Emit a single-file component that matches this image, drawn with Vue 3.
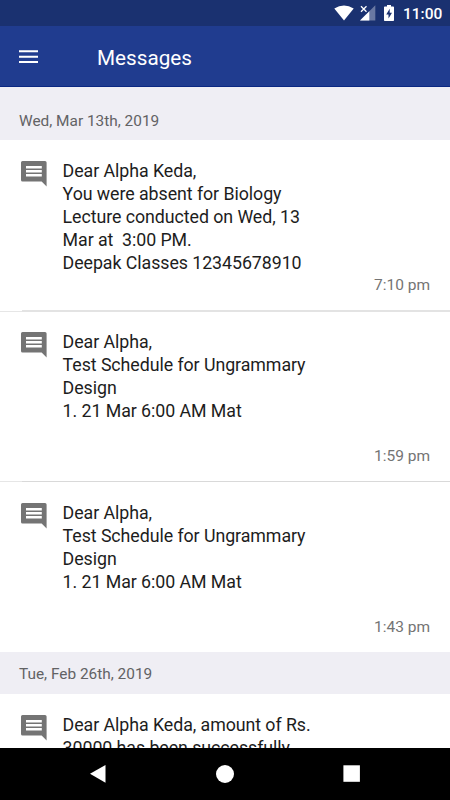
<script setup>
const groups = [
  {
    date: 'Wed, Mar 13th, 2019',
    messages: [
      {
        time: '7:10 pm',
        lines: [
          'Dear Alpha Keda,',
          'You were absent for Biology',
          'Lecture conducted on Wed, 13',
          'Mar at  3:00 PM.',
          'Deepak Classes 12345678910',
        ],
      },
      {
        time: '1:59 pm',
        lines: ['Dear Alpha,', 'Test Schedule for Ungrammary', 'Design', '1. 21 Mar 6:00 AM Mat'],
      },
      {
        time: '1:43 pm',
        lines: ['Dear Alpha,', 'Test Schedule for Ungrammary', 'Design', '1. 21 Mar 6:00 AM Mat'],
      },
    ],
  },
  {
    date: 'Tue, Feb 26th, 2019',
    messages: [
      {
        time: '',
        lines: ['Dear Alpha Keda, amount of Rs.', '30000 has been successfully'],
      },
    ],
  },
]
</script>

<template>
  <div class="screen">
    <div class="status">
      <svg class="wifi" width="20" height="16" viewBox="0 0 20 16">
        <path d="M0.3 3.6Q10 -2.8 19.7 3.6L10 15.6Z" fill="#fff" />
      </svg>
      <svg class="signal" width="16" height="16" viewBox="0 0 16 16">
        <path d="M15.3 0.2V15.5H0Z" fill="#fff" opacity="0.35" />
        <path d="M9.3 6.2V15.5H0Z" fill="#fff" />
        <path d="M0 0H7.5V7.5H0Z" fill="#1a3170" />
        <path d="M1 1.3L6.5 6.8M6.5 1.3L1 6.8" stroke="#fff" stroke-width="1.3" />
      </svg>
      <svg class="battery" width="10" height="16" viewBox="0 0 10 16">
        <path d="M3 0H7V1.4H9.2Q10 1.4 10 2.2V15.2Q10 16 9.2 16H.8Q0 16 0 15.2V2.2Q0 1.4 .8 1.4H3Z" fill="#fff" />
        <path d="M5.7 3.8L2.2 9.6H4.5V13.5L8 7.7H5.7Z" fill="#1a3170" />
      </svg>
      <span class="clock">11:00</span>
    </div>

    <header class="bar">
      <svg class="menu" width="19" height="14" viewBox="0 0 19 14">
        <path d="M0 1.3H19M0 6.8H19M0 12H19" stroke="#fff" stroke-width="2" />
      </svg>
      <h1 class="title">Messages</h1>
    </header>

    <main class="list">
      <section v-for="group in groups" :key="group.date" class="group">
        <h2 class="date">{{ group.date }}</h2>
        <article v-for="(message, i) in group.messages" :key="i" class="message">
          <svg class="comment" width="26" height="26" viewBox="0 0 26 26">
            <path
              fill="#747474"
              fill-rule="evenodd"
              d="M1.5 0H24Q25.6 0 25.6 1.5V25.4L20.6 20.4H1.5Q0 20.4 0 18.9V1.5Q0 0 1.5 0ZM5 5V7.6H20.8V5ZM5 9V11.5H20.8V9ZM5 13V15.5H20.8V13Z"
            />
          </svg>
          <div class="body">
            <p v-for="(line, n) in message.lines" :key="n" class="line">{{ line }}</p>
          </div>
          <time class="time">{{ message.time }}</time>
        </article>
      </section>
    </main>

    <nav class="nav">
      <svg class="key" width="20" height="20" viewBox="0 0 20 20"><path d="M2 9.8L17.5 1V18.8Z" fill="#fff" /></svg>
      <svg class="key" width="20" height="20" viewBox="0 0 20 20"><circle cx="10" cy="10" r="9" fill="#fff" /></svg>
      <svg class="key" width="20" height="20" viewBox="0 0 20 20"><rect x="1.4" y="1.3" width="16.5" height="16.5" fill="#fff" /></svg>
    </nav>
  </div>
</template>

<style>
body {
  margin: 0;
  overflow: hidden;
}
</style>

<style scoped>
.screen {
  display: flex;
  flex-direction: column;
  width: 450px;
  height: 800px;
  overflow: hidden;
  background: #fff;
  font-family: Roboto, sans-serif;
}
.status {
  display: flex;
  flex: none;
  align-items: center;
  justify-content: flex-end;
  height: 26px;
  padding-right: 9px;
  box-sizing: border-box;
  background: #1a3170;
}
.signal {
  margin-left: 6px;
}
.battery {
  margin-left: 8px;
}
.clock {
  width: 38px;
  margin-left: 9px;
  padding-top: 3px;
  color: #fff;
  font-size: 15.5px;
  font-weight: 500;
  line-height: 23px;
  white-space: nowrap;
}
.bar {
  display: flex;
  flex: none;
  align-items: center;
  height: 61px;
  padding: 2px 0 0 19px;
  box-sizing: border-box;
  background: #203c8f;
  border-bottom: 1px solid #0b2882;
}
.title {
  margin: 2px 0 0 59px;
  color: #fff;
  font-size: 20.7px;
  font-weight: 400;
  line-height: 28px;
}
.list {
  flex: 1;
  min-height: 0;
  overflow: hidden;
}
.date {
  display: flex;
  align-items: center;
  height: 42px;
  margin: 0;
  padding: 2px 0 0 19px;
  box-sizing: border-box;
  background: #efeef4;
  color: #626264;
  font-size: 15.4px;
  font-weight: 400;
}
.group:first-child .date {
  height: 53px;
  padding-top: 15px;
}
.message {
  display: grid;
  grid-template-columns: 41.6px 1fr;
  grid-template-rows: 1fr 20px;
  height: 170px;
  padding: 18px 20px 16px 21px;
  box-sizing: border-box;
  background:
    linear-gradient(#d9d9d9, #d9d9d9) 22px 100% / 100% 1px no-repeat,
    linear-gradient(#e6e6e6, #e6e6e6) 0 100% / 22px 1px no-repeat;
}
.message:nth-of-type(1) {
  height: 172px;
  padding: 19px 20px 17px 21px;
  background:
    linear-gradient(#e3e3e3, #e3e3e3) 22px 100% / 100% 2px no-repeat,
    linear-gradient(#e6e6e6, #e6e6e6) 0 100% / 22px 1px no-repeat;
}
.message:last-child {
  padding: 19px 20px 15px 21px;
  background: none;
}
.comment {
  margin-top: 2px;
}
.body {
  min-height: 0;
}
.line {
  margin: 0;
  color: #1d1d1d;
  font-size: 17.8px;
  letter-spacing: -0.06px;
  line-height: 23px;
  white-space: pre;
}
.time {
  grid-column: 1 / -1;
  color: #747474;
  font-size: 15.5px;
  line-height: 20px;
  text-align: right;
}
.nav {
  display: flex;
  flex: none;
  align-items: center;
  justify-content: center;
  gap: 107px;
  height: 52px;
  background: #000;
}
</style>
